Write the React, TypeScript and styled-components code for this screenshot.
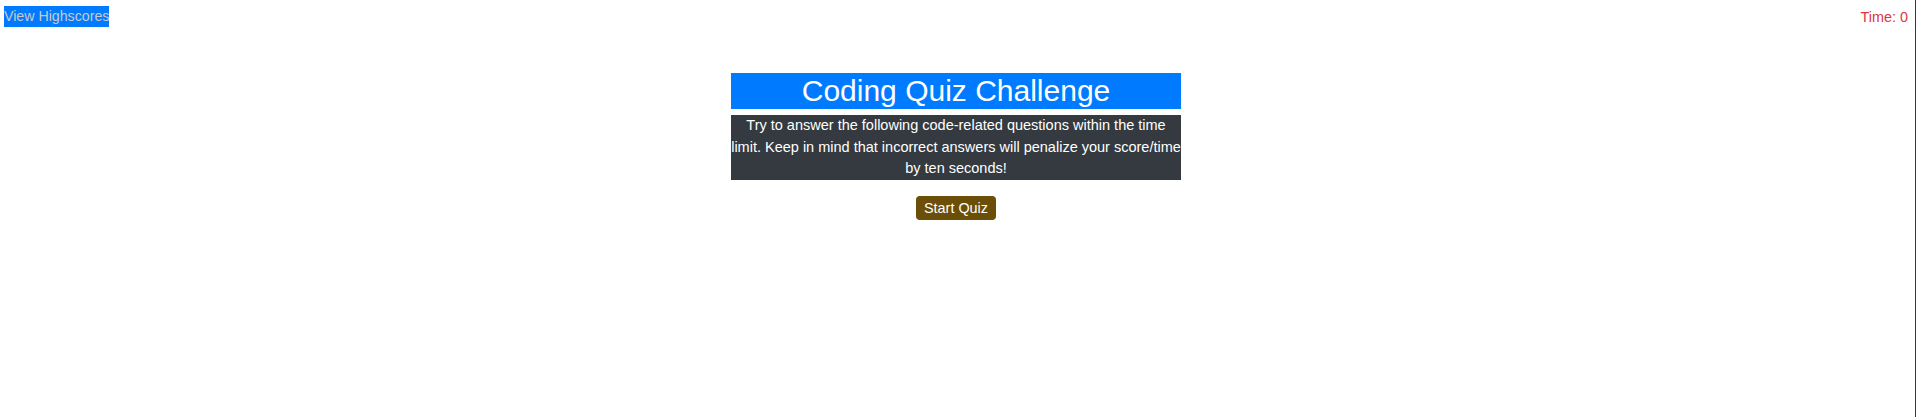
import React from "react";
import styled, { createGlobalStyle } from "styled-components";

const GlobalStyle = createGlobalStyle`
  html, body {
    margin: 0;
    padding: 0;
    background: #ffffff;
  }
  body {
    font-family: "Liberation Sans", Arial, Helvetica, sans-serif;
    font-size: 14.4px;
    line-height: 1.5;
  }
`;

const Page = styled.div`
  box-sizing: border-box;
  width: 1916px;
  min-height: 417px;
  padding: 6px 7px 0 4px;
  border-right: 1px solid #3a3a3a;
  display: flex;
  flex-direction: column;
`;

const TopBar = styled.header`
  display: flex;
  justify-content: space-between;
  align-items: flex-start;
  height: 21px;
`;

const HighscoresLink = styled.a`
  display: inline-block;
  background: #007bff;
  color: #c9c9c9;
  font-size: 14.2px;
  line-height: 21px;
  padding: 0;
  text-decoration: none;
  cursor: pointer;
`;

const Timer = styled.div`
  color: #dc3545;
  font-size: 14.4px;
  line-height: 21px;
  padding-top: 1px;
`;

const Main = styled.main`
  display: flex;
  flex-direction: column;
  align-items: center;
  margin-top: 46px;
`;

const Card = styled.section`
  width: 450px;
  display: flex;
  flex-direction: column;
  gap: 6px;
`;

const Title = styled.h1`
  margin: 0;
  background: #007bff;
  color: #ffffff;
  font-weight: 400;
  font-size: 30px;
  line-height: 36px;
  text-align: center;
`;

const Intro = styled.p`
  margin: 0;
  background: #343a40;
  color: #ffffff;
  font-size: 14.5px;
  line-height: 21.6px;
  padding: 0;
  text-align: center;
`;

const StartButton = styled.button`
  margin-top: 16px;
  background: #6b4f08;
  color: #ffffff;
  border: none;
  border-radius: 4px;
  font-family: inherit;
  font-size: 14.4px;
  line-height: 16px;
  padding: 4px 8px;
  cursor: pointer;
`;

export default function App() {
  return (
    <>
      <GlobalStyle />
      <Page>
        <TopBar>
          <HighscoresLink>View Highscores</HighscoresLink>
          <Timer>Time: 0</Timer>
        </TopBar>
        <Main>
          <Card>
            <Title>Coding Quiz Challenge</Title>
            <Intro>
              Try to answer the following code-related questions within the time
              limit. Keep in mind that incorrect answers will penalize your
              score/time by ten seconds!
            </Intro>
          </Card>
          <StartButton>Start Quiz</StartButton>
        </Main>
      </Page>
    </>
  );
}
